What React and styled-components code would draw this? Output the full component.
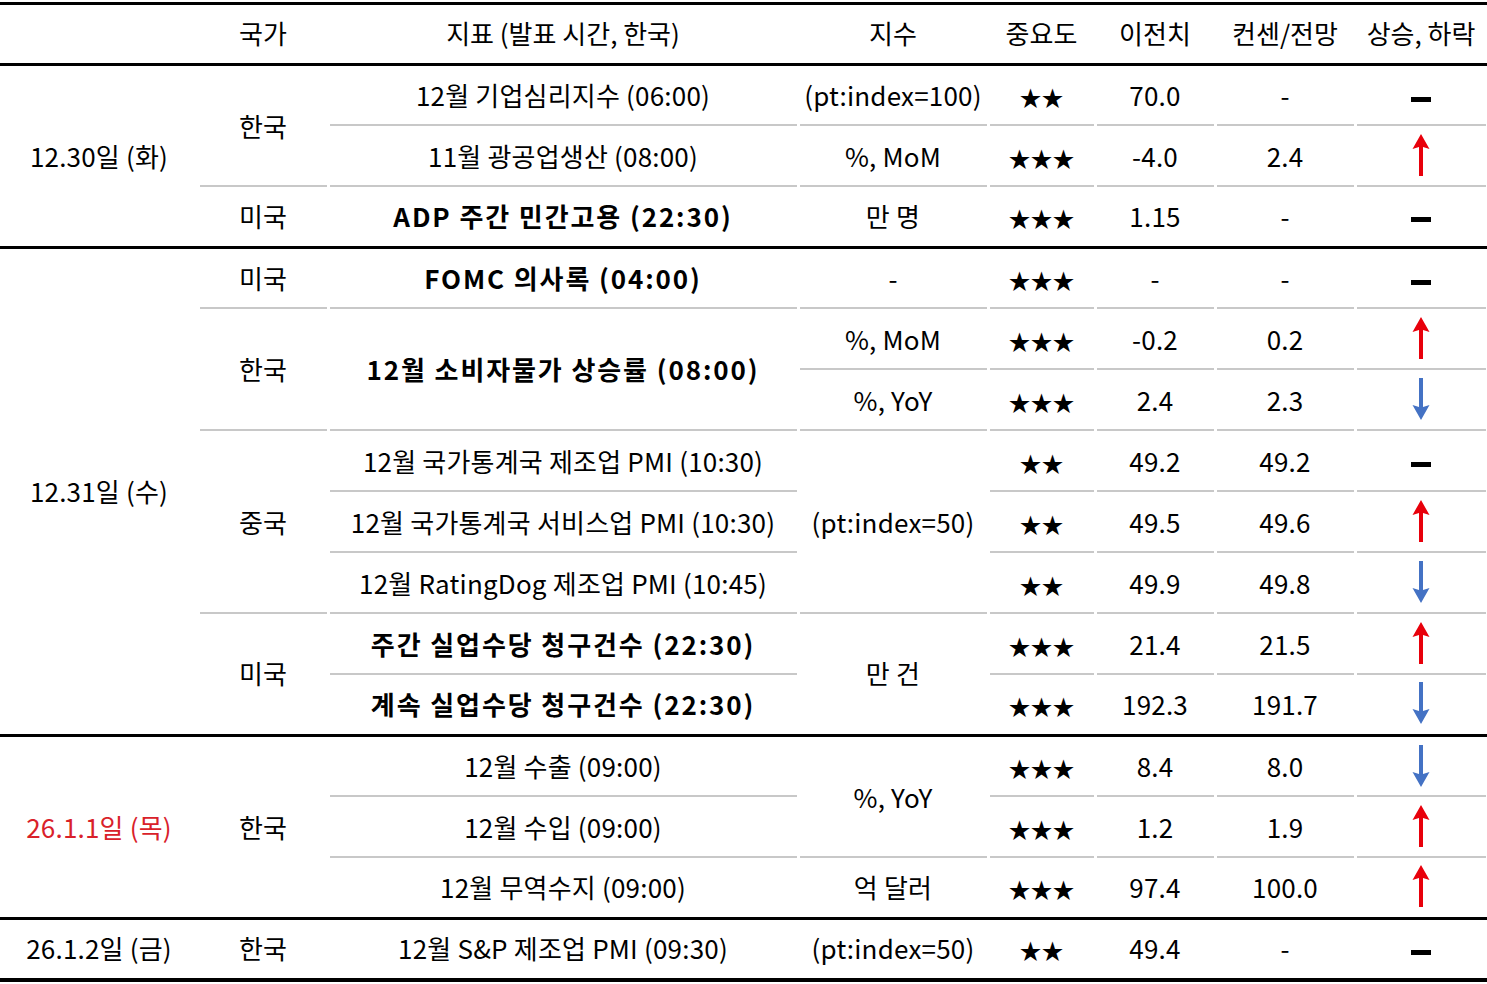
import styled, { createGlobalStyle } from 'styled-components';

const GlobalStyle = createGlobalStyle`
  html, body {
    margin: 0;
    padding: 0;
    background: #fff;
  }
  body {
    font-family: "Noto Sans CJK KR", "Noto Sans", sans-serif;
    color: #000;
  }
`;

const Page = styled.div`
  padding-top: 2px;
  width: 1487px;
`;

const Table = styled.table`
  width: 1487px;
  table-layout: fixed;
  border-collapse: collapse;
  border-spacing: 0;
`;

const Head = styled.thead`
  border-top: 3px solid #000;
  border-bottom: 3px solid #000;
`;

const Group = styled.tbody`
  border-bottom: ${(p) => (p.$last ? '4px' : '3px')} solid #000;
`;

const Row = styled.tr`
  height: 61px;
`;

const Th = styled.th`
  height: 54px;
  padding: 0 0 4px;
  font-size: 26px;
  font-weight: 400;
  text-align: center;
  vertical-align: middle;
  white-space: nowrap;
`;

const Td = styled.td`
  padding: 0 0 2px;
  font-size: 26px;
  font-weight: ${(p) => (p.$bold ? 700 : 400)};
  letter-spacing: ${(p) => (p.$bold ? '1.9px' : '0.2px')};
  color: ${(p) => (p.$red ? '#d9212a' : '#000')};
  text-align: center;
  vertical-align: middle;
  white-space: nowrap;
  background: ${(p) =>
    p.$line
      ? 'linear-gradient(#c8c8c8, #c8c8c8) center bottom / calc(100% - 3px) 2px no-repeat'
      : 'none'};
`;

const Stars = styled.span`
  font-size: 22px;
  letter-spacing: 0;
`;

const Bar = styled.span`
  display: inline-block;
  width: 20px;
  height: 5px;
  background: #000;
  vertical-align: middle;
`;

const ArrowSvg = styled.svg`
  display: block;
  margin: 0 auto;
`;

const Arrow = ({ dir }) => {
  const color = dir === 'up' ? '#e8000b' : '#4472c4';
  return (
    <ArrowSvg width="18" height="42" viewBox="0 0 18 42">
      <g transform={dir === 'up' ? undefined : 'rotate(180 9 21)'}>
        <polygon
          points="9,0 17.5,15 11,13 11,42 7,42 7,13 0.5,15"
          fill={color}
        />
      </g>
    </ArrowSvg>
  );
};

const Trend = ({ v }) => {
  if (v === 'up') return <Arrow dir="up" />;
  if (v === 'down') return <Arrow dir="down" />;
  return <Bar />;
};

const cols = [198, 130, 470, 190, 107, 120, 140, 132];

const headers = ['', '국가', '지표 (발표 시간, 한국)', '지수', '중요도', '이전치', '컨센/전망', '상승, 하락'];

// 각 행의 수치부 (중요도, 이전치, 컨센, 방향)
const Values = ({ s, prev, cons, trend, line }) => (
  <>
    <Td $line={line}>
      <Stars>{s === 3 ? '★★★' : '★★'}</Stars>
    </Td>
    <Td $line={line}>{prev}</Td>
    <Td $line={line}>{cons}</Td>
    <Td $line={line}>
      <Trend v={trend} />
    </Td>
  </>
);

const App = () => (
  <Page>
    <GlobalStyle />
    <Table>
      <colgroup>
        {cols.map((w, i) => (
          <col key={i} style={{ width: w }} />
        ))}
      </colgroup>
      <Head>
        <tr>
          {headers.map((h, i) => (
            <Th key={i}>{h}</Th>
          ))}
        </tr>
      </Head>

      <Group>
        <Row>
          <Td rowSpan={3}>12.30일 (화)</Td>
          <Td rowSpan={2} $line>한국</Td>
          <Td $line>12월 기업심리지수 (06:00)</Td>
          <Td $line>(pt:index=100)</Td>
          <Values s={2} prev="70.0" cons="-" trend="flat" line />
        </Row>
        <Row>
          <Td $line>11월 광공업생산 (08:00)</Td>
          <Td $line>%, MoM</Td>
          <Values s={3} prev="-4.0" cons="2.4" trend="up" line />
        </Row>
        <Row>
          <Td>미국</Td>
          <Td $bold>ADP 주간 민간고용 (22:30)</Td>
          <Td>만 명</Td>
          <Values s={3} prev="1.15" cons="-" trend="flat" />
        </Row>
      </Group>

      <Group>
        <Row>
          <Td rowSpan={8}>12.31일 (수)</Td>
          <Td $line>미국</Td>
          <Td $line $bold>FOMC 의사록 (04:00)</Td>
          <Td $line>-</Td>
          <Values s={3} prev="-" cons="-" trend="flat" line />
        </Row>
        <Row>
          <Td rowSpan={2} $line>한국</Td>
          <Td rowSpan={2} $line $bold>12월 소비자물가 상승률 (08:00)</Td>
          <Td $line>%, MoM</Td>
          <Values s={3} prev="-0.2" cons="0.2" trend="up" line />
        </Row>
        <Row>
          <Td $line>%, YoY</Td>
          <Values s={3} prev="2.4" cons="2.3" trend="down" line />
        </Row>
        <Row>
          <Td rowSpan={3} $line>중국</Td>
          <Td $line>12월 국가통계국 제조업 PMI (10:30)</Td>
          <Td rowSpan={3} $line>(pt:index=50)</Td>
          <Values s={2} prev="49.2" cons="49.2" trend="flat" line />
        </Row>
        <Row>
          <Td $line>12월 국가통계국 서비스업 PMI (10:30)</Td>
          <Values s={2} prev="49.5" cons="49.6" trend="up" line />
        </Row>
        <Row>
          <Td $line>12월 RatingDog 제조업 PMI (10:45)</Td>
          <Values s={2} prev="49.9" cons="49.8" trend="down" line />
        </Row>
        <Row>
          <Td rowSpan={2}>미국</Td>
          <Td $line $bold>주간 실업수당 청구건수 (22:30)</Td>
          <Td rowSpan={2}>만 건</Td>
          <Values s={3} prev="21.4" cons="21.5" trend="up" line />
        </Row>
        <Row>
          <Td $bold>계속 실업수당 청구건수 (22:30)</Td>
          <Values s={3} prev="192.3" cons="191.7" trend="down" />
        </Row>
      </Group>

      <Group>
        <Row>
          <Td rowSpan={3} $red>26.1.1일 (목)</Td>
          <Td rowSpan={3}>한국</Td>
          <Td $line>12월 수출 (09:00)</Td>
          <Td rowSpan={2} $line>%, YoY</Td>
          <Values s={3} prev="8.4" cons="8.0" trend="down" line />
        </Row>
        <Row>
          <Td $line>12월 수입 (09:00)</Td>
          <Values s={3} prev="1.2" cons="1.9" trend="up" line />
        </Row>
        <Row>
          <Td>12월 무역수지 (09:00)</Td>
          <Td>억 달러</Td>
          <Values s={3} prev="97.4" cons="100.0" trend="up" />
        </Row>
      </Group>

      <Group $last>
        <Row>
          <Td>26.1.2일 (금)</Td>
          <Td>한국</Td>
          <Td>12월 S&amp;P 제조업 PMI (09:30)</Td>
          <Td>(pt:index=50)</Td>
          <Values s={2} prev="49.4" cons="-" trend="flat" />
        </Row>
      </Group>
    </Table>
  </Page>
);

export default App;
